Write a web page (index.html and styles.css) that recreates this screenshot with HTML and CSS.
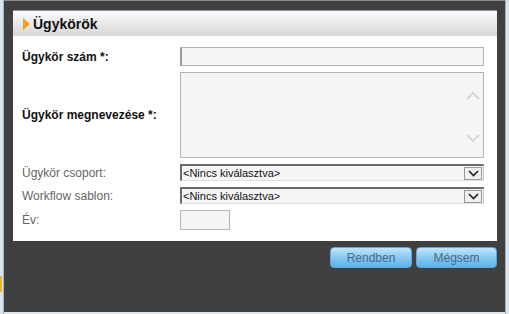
FILE: index.html
```html
<!DOCTYPE html>
<html lang="hu">
<head>
  <meta charset="UTF-8">
  <title>Ügykörök</title>
  <link rel="stylesheet" href="styles.css">
</head>
<body>
  <div class="page-edge"><span class="edge-mark"></span></div>
  <div class="dialog">
    <div class="panel">
      <div class="panel-head">
        <span class="head-arrow"></span>
        <span class="head-title">Ügykörök</span>
      </div>
      <div class="form">
        <div class="row">
          <label class="lbl req">Ügykör szám *:</label>
          <div class="field text-input wide"></div>
        </div>
        <div class="row">
          <label class="lbl req">Ügykör megnevezése *:</label>
          <div class="field textarea">
            <div class="scroll">
              <svg width="14" height="9" viewBox="0 0 14 9"><path d="M1 8 L7 2 L13 8" fill="none" stroke="#d0d0d0" stroke-width="1.6"/></svg>
              <svg width="14" height="9" viewBox="0 0 14 9"><path d="M1 1 L7 7 L13 1" fill="none" stroke="#d0d0d0" stroke-width="1.6"/></svg>
            </div>
          </div>
        </div>
        <div class="row">
          <label class="lbl">Ügykör csoport:</label>
          <div class="field select">
            <span class="sel-text">&lt;Nincs kiválasztva&gt;</span>
            <span class="sel-btn"><svg width="11" height="7" viewBox="0 0 11 7"><path d="M1 1 L5.5 5.5 L10 1" fill="none" stroke="#222" stroke-width="1.6"/></svg></span>
          </div>
        </div>
        <div class="row">
          <label class="lbl">Workflow sablon:</label>
          <div class="field select">
            <span class="sel-text">&lt;Nincs kiválasztva&gt;</span>
            <span class="sel-btn"><svg width="11" height="7" viewBox="0 0 11 7"><path d="M1 1 L5.5 5.5 L10 1" fill="none" stroke="#222" stroke-width="1.6"/></svg></span>
          </div>
        </div>
        <div class="row">
          <label class="lbl">Év:</label>
          <div class="field text-input short"></div>
        </div>
      </div>
    </div>
    <div class="actions">
      <button class="btn">Rendben</button>
      <button class="btn">Mégsem</button>
    </div>
  </div>
  <div class="page-edge right"></div>
</body>
</html>
```

FILE: styles.css
```css
* { box-sizing: border-box; margin: 0; padding: 0; }
html { background: #dfe5ec; }
body {
  width: 509px;
  height: 314px;
  display: flex;
  align-items: flex-start;
  font-family: "Liberation Sans", Arial, sans-serif;
  overflow: hidden;
}
.page-edge {
  flex: none;
  width: 4px;
  height: 314px;
  background: #dde3ea;
  border-right: 1px solid #9fb3c8;
  padding-top: 276px;
}
.page-edge.right {
  border-right: none;
  border-left: 1px solid #9fb3c8;
}
.edge-mark {
  display: block;
  width: 2px;
  height: 16px;
  background: #e8b530;
}
.dialog {
  flex: none;
  width: 501px;
  height: 312px;
  background: #404040;
  border-top: 1px solid #8c8c8c;
  padding: 9px 8px 0 9px;
}
.panel {
  background: #fff;
  height: 231px;
  border-top: 1px solid #8a93a6;
}
.panel-head {
  height: 25px;
  background: linear-gradient(to bottom, #fbfbfb, #d6d6d6);
  display: flex;
  align-items: center;
  padding-left: 10px;
}
.head-arrow {
  width: 0;
  height: 0;
  border-top: 6px solid transparent;
  border-bottom: 6px solid transparent;
  border-left: 7px solid #f0a020;
  margin-right: 3px;
}
.head-title {
  font-size: 14px;
  font-weight: bold;
  color: #111;
}
.form {
  padding: 11px 11px 0 9px;
  display: flex;
  flex-direction: column;
  gap: 6px;
}
.row {
  display: flex;
  align-items: center;
}
.lbl {
  width: 158px;
  font-size: 12px;
  color: #666;
}
.lbl.req {
  font-weight: bold;
  color: #111;
}
.field {
  background: #f5f5f5;
  border: 1px solid #b4b4b4;
}
.text-input { height: 19px; }
.wide {
  width: 304px;
  border-left: 2px solid #9a9a9a;
}
.short { width: 50px; height: 20px; }
.textarea {
  width: 304px;
  height: 86px;
  display: flex;
  justify-content: flex-end;
}
.scroll {
  width: 18px;
  padding: 18px 2px 14px 0;
  display: flex;
  flex-direction: column;
  justify-content: space-between;
  align-items: center;
}
.select {
  width: 304px;
  height: 17px;
  display: flex;
  align-items: center;
  justify-content: space-between;
  border-top: 2px solid #6a6a6a;
  border-left: 2px solid #6a6a6a;
  border-right: 1px solid #c8c8c8;
  border-bottom: 1px solid #e0e0e0;
}
.sel-text {
  font-size: 11px;
  color: #111;
  padding-left: 1px;
}
.sel-btn {
  width: 18px;
  height: 13px;
  border: 1px solid #999;
  background: #f0f0f0;
  display: flex;
  align-items: center;
  justify-content: center;
  margin-right: 1px;
}
.actions {
  display: flex;
  justify-content: flex-end;
  gap: 4px;
  padding-top: 6px;
}
.btn {
  width: 82px;
  height: 21px;
  border: 1px solid #5aa8dc;
  border-radius: 4px;
  background: linear-gradient(to bottom, #c4e4f9, #8ccbf2 45%, #5cb3ea);
  color: #4a6a8c;
  font-family: "Liberation Sans", Arial, sans-serif;
  font-size: 12px;
}
.btn + .btn { width: 81px; }
```
